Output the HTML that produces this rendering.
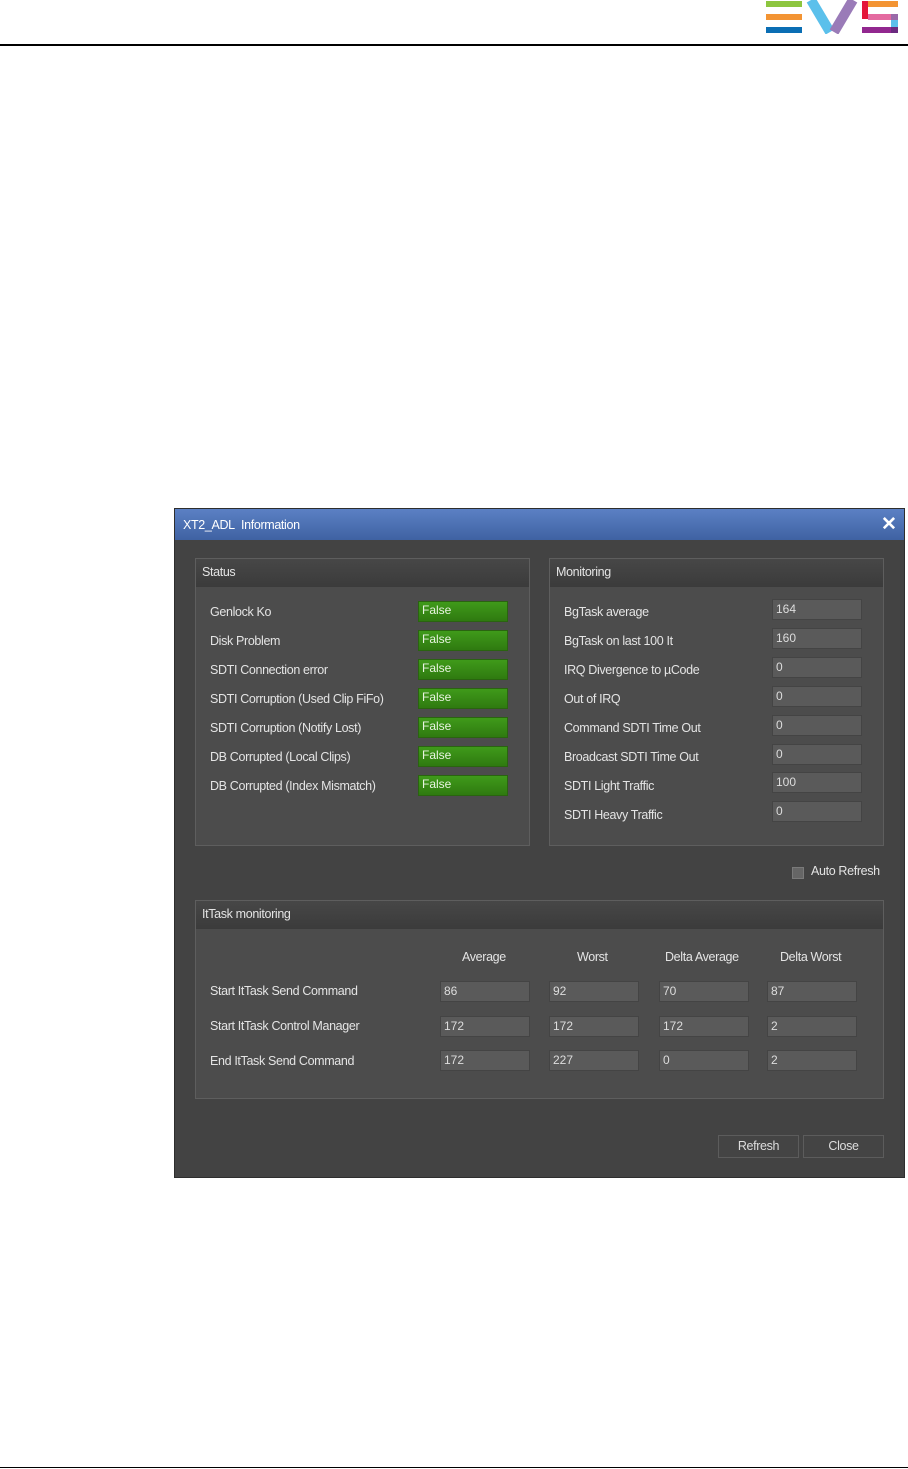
<!DOCTYPE html>
<html><head><meta charset="utf-8"><style>
*{margin:0;padding:0;box-sizing:border-box}
body{width:908px;height:1469px;background:#fff;position:relative;font-family:"Liberation Sans",sans-serif;overflow:hidden}
.a{position:absolute}
.t{position:absolute;color:#e4e4e4;font-size:12.5px;white-space:nowrap;letter-spacing:-0.35px}
.g{position:absolute;width:90px;height:21px;background:linear-gradient(#3f9a1a,#2f7a10);border:1px solid #2a6410;color:#e8f4e0;font-size:12px;padding:1px 0 0 3px}
.f{position:absolute;width:90px;height:21px;background:#5a5a5a;border:1px solid #444;color:#ddd;font-size:12px;padding:2px 0 0 3px}
.p{position:absolute;background:#4c4c4c;border:1px solid #5e5e5e}
.h{position:absolute;left:0;right:0;top:0;height:28px;background:linear-gradient(#474747,#3b3b3b);color:#e4e4e4;font-size:12.5px;padding:6px 0 0 6px;letter-spacing:-0.35px}
.b{position:absolute;width:81px;height:23px;border:1px solid #5c5c5c;background:#444;color:#ddd;font-size:12.5px;text-align:center;line-height:21px;letter-spacing:-0.35px}
</style></head><body>
<div class="a" style="left:766px;top:1px;width:36px;height:6px;background:#8dc63f"></div>
<div class="a" style="left:766px;top:14px;width:36px;height:6px;background:#f39433"></div>
<div class="a" style="left:766px;top:27px;width:36px;height:6px;background:#0a6eb4"></div>
<svg class="a" style="left:806px;top:0" width="52" height="34"><path d="M5 0 L24 32" stroke="#5bc0eb" stroke-width="10"/><path d="M47 0 L28 32" stroke="#9a7bb8" stroke-width="10"/></svg>
<div class="a" style="left:862px;top:1px;width:36px;height:6px;background:#f39433"></div>
<div class="a" style="left:862px;top:1px;width:6px;height:18px;background:#e4163a"></div>
<div class="a" style="left:868px;top:14px;width:23px;height:6px;background:#e46aa0"></div>
<div class="a" style="left:891px;top:14px;width:7px;height:6px;background:#9a6aa8"></div>
<div class="a" style="left:891px;top:20px;width:7px;height:7px;background:#5bc0eb"></div>
<div class="a" style="left:862px;top:27px;width:36px;height:6px;background:#92278f"></div>
<div class="a" style="left:891px;top:27px;width:7px;height:6px;background:#6a2a7f"></div>
<div class="a" style="left:0;top:44px;width:908px;height:2px;background:#000"></div>
<div class="a" style="left:0;top:1467px;width:908px;height:1px;background:#000"></div>

<div class="a" style="left:174px;top:508px;width:731px;height:670px;background:#434343;border:1px solid #2e2e2e"></div>
<div class="a" style="left:175px;top:509px;width:729px;height:31px;background:linear-gradient(#5b80c4,#3f62a2)"></div>
<div class="t" style="left:183px;top:518px;color:#fff">XT2_ADL&nbsp; Information</div>
<div class="t" style="left:881px;top:513px;color:#fff;font-size:19px;font-weight:bold">✕</div>

<div class="p" style="left:195px;top:558px;width:335px;height:288px"><div class="h">Status</div></div>
<div class="p" style="left:549px;top:558px;width:335px;height:288px"><div class="h">Monitoring</div></div>

<div class="t" style="left:210px;top:605px">Genlock Ko</div><div class="g" style="left:418px;top:601px">False</div>
<div class="t" style="left:210px;top:634px">Disk Problem</div><div class="g" style="left:418px;top:630px">False</div>
<div class="t" style="left:210px;top:663px">SDTI Connection error</div><div class="g" style="left:418px;top:659px">False</div>
<div class="t" style="left:210px;top:692px">SDTI Corruption (Used Clip FiFo)</div><div class="g" style="left:418px;top:688px">False</div>
<div class="t" style="left:210px;top:721px">SDTI Corruption (Notify Lost)</div><div class="g" style="left:418px;top:717px">False</div>
<div class="t" style="left:210px;top:750px">DB Corrupted (Local Clips)</div><div class="g" style="left:418px;top:746px">False</div>
<div class="t" style="left:210px;top:779px">DB Corrupted (Index Mismatch)</div><div class="g" style="left:418px;top:775px">False</div>

<div class="t" style="left:564px;top:605px">BgTask average</div><div class="f" style="left:772px;top:599px">164</div>
<div class="t" style="left:564px;top:634px">BgTask on last 100 It</div><div class="f" style="left:772px;top:628px">160</div>
<div class="t" style="left:564px;top:663px">IRQ Divergence to µCode</div><div class="f" style="left:772px;top:657px">0</div>
<div class="t" style="left:564px;top:692px">Out of IRQ</div><div class="f" style="left:772px;top:686px">0</div>
<div class="t" style="left:564px;top:721px">Command SDTI Time Out</div><div class="f" style="left:772px;top:715px">0</div>
<div class="t" style="left:564px;top:750px">Broadcast SDTI Time Out</div><div class="f" style="left:772px;top:744px">0</div>
<div class="t" style="left:564px;top:779px">SDTI Light Traffic</div><div class="f" style="left:772px;top:772px">100</div>
<div class="t" style="left:564px;top:808px">SDTI Heavy Traffic</div><div class="f" style="left:772px;top:801px">0</div>

<div class="a" style="left:792px;top:867px;width:12px;height:12px;background:#666;border:1px solid #7a7a7a"></div>
<div class="t" style="left:811px;top:864px">Auto Refresh</div>

<div class="p" style="left:195px;top:900px;width:689px;height:199px"><div class="h">ItTask monitoring</div></div>
<div class="t" style="left:462px;top:950px">Average</div>
<div class="t" style="left:577px;top:950px">Worst</div>
<div class="t" style="left:665px;top:950px">Delta Average</div>
<div class="t" style="left:780px;top:950px">Delta Worst</div>
<div class="t" style="left:210px;top:984px">Start ItTask Send Command</div>
<div class="t" style="left:210px;top:1019px">Start ItTask Control Manager</div>
<div class="t" style="left:210px;top:1054px">End ItTask Send Command</div>
<div class="f" style="left:440px;top:981px">86</div><div class="f" style="left:549px;top:981px">92</div><div class="f" style="left:659px;top:981px">70</div><div class="f" style="left:767px;top:981px">87</div>
<div class="f" style="left:440px;top:1016px">172</div><div class="f" style="left:549px;top:1016px">172</div><div class="f" style="left:659px;top:1016px">172</div><div class="f" style="left:767px;top:1016px">2</div>
<div class="f" style="left:440px;top:1050px">172</div><div class="f" style="left:549px;top:1050px">227</div><div class="f" style="left:659px;top:1050px">0</div><div class="f" style="left:767px;top:1050px">2</div>

<div class="b" style="left:718px;top:1135px">Refresh</div>
<div class="b" style="left:803px;top:1135px">Close</div>
</body></html>
